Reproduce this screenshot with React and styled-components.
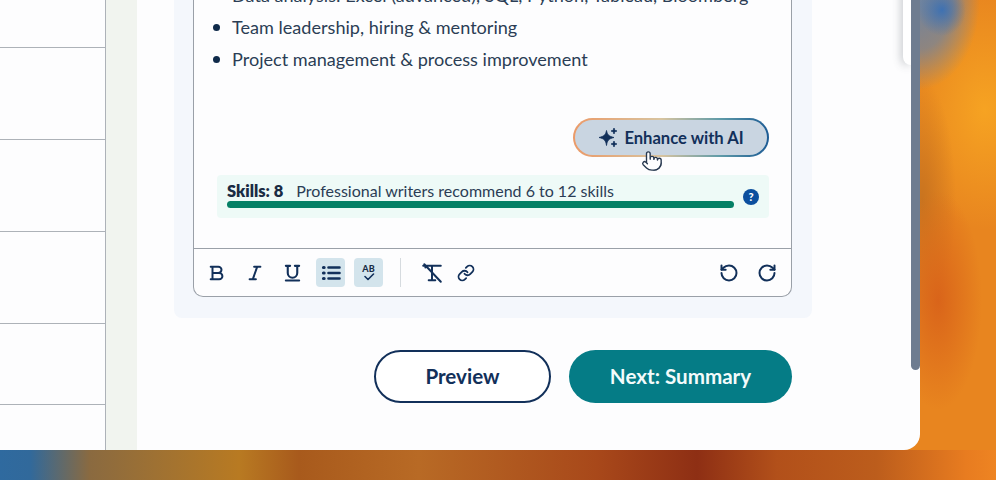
import React from 'react'
import styled, { createGlobalStyle } from 'styled-components'
import { Link, RotateCcw, RotateCw, Pointer } from 'lucide-react'

const GlobalStyle = createGlobalStyle`
  html, body {
    margin: 0;
    width: 996px;
    height: 480px;
    overflow: hidden;
  }
  body {
    font-family: 'Lato', 'Noto Sans', sans-serif;
    color: #2b3d55;
    background-color: #e8851f;
    background-image:
      linear-gradient(90deg, #2f6a9f 0%, #31699b 3%, #8a6a40 9%, #b87a22 24%, #a85a1c 30%, #b86a25 42%, #a8481a 60%, #8e2f14 70%, #b2501a 78%, #bc5d1c 88%, #e87c20 97%, #ee8422 100%),
      radial-gradient(ellipse 24px 26px at 942px 10px, rgba(50, 110, 185, 0.85) 0%, rgba(60, 110, 175, 0) 100%),
      radial-gradient(ellipse 62px 90px at 918px 0px, #6f84a0 0%, rgba(111, 132, 160, 0.75) 55%, rgba(111, 132, 160, 0) 100%),
      radial-gradient(ellipse 44px 110px at 938px 300px, #d9641a 0%, rgba(217, 100, 26, 0) 100%),
      radial-gradient(ellipse 34px 120px at 922px 200px, #c9741f 0%, rgba(201, 116, 31, 0) 100%),
      radial-gradient(ellipse 80px 120px at 985px 110px, #f6a322 0%, rgba(246, 163, 34, 0) 100%);
    background-size: 100% 30px, auto, auto, auto, auto, auto;
    background-position: 0 450px, 0 0, 0 0, 0 0, 0 0, 0 0;
    background-repeat: no-repeat;
  }
  * {
    box-sizing: border-box;
  }
`

const Window = styled.div`
  position: relative;
  display: flex;
  width: 920px;
  height: 450px;
  background: #fdfdfe;
  border-bottom-right-radius: 16px;
  overflow: hidden;
`

const Sidebar = styled.div`
  width: 106px;
  flex: none;
  border-right: 1px solid #adb2b8;
  padding-top: 47px;
`

const SideRow = styled.div`
  height: ${props => props.$height}px;
  border-top: 1px solid #adb2b8;
`

const Strip = styled.div`
  width: 31px;
  flex: none;
  background: #f1f4ef;
`

const Main = styled.div`
  flex: 1;
  padding-left: 37px;
  min-width: 0;
`

const Panel = styled.div`
  width: 638px;
  height: 318px;
  padding: 0 20px 21px 19px;
  background: #f4f7fc;
  border-bottom-left-radius: 8px;
  border-bottom-right-radius: 8px;
`

const Editor = styled.div`
  height: 297px;
  display: flex;
  flex-direction: column;
  background: #fdfdfe;
  border: 1px solid #9aa0a8;
  border-top: none;
  border-bottom-left-radius: 10px;
  border-bottom-right-radius: 10px;
`

const EditorBody = styled.div`
  height: 248px;
  flex: none;
  padding: 0 22px 0 23px;
  overflow: hidden;
`

const Bullets = styled.ul`
  margin: -21px 0 0;
  padding: 0 0 0 15px;
  list-style: none;
  height: 138px;
  font-size: 18.1px;
  line-height: 32px;
`

const Bullet = styled.li`
  position: relative;
  white-space: nowrap;

  &::before {
    content: '';
    position: absolute;
    left: -19px;
    top: 13px;
    width: 7px;
    height: 7px;
    border-radius: 50%;
    background: #0f2a4a;
  }
`

const EnhanceRow = styled.div`
  display: flex;
  justify-content: flex-end;
  padding-top: 1px;
`

const EnhanceButton = styled.button`
  position: relative;
  display: flex;
  align-items: center;
  justify-content: center;
  gap: 5px;
  width: 196px;
  height: 39px;
  padding: 0;
  border: 2px solid transparent;
  border-radius: 20px;
  background:
    linear-gradient(#c9d5e1, #c9d5e1) padding-box,
    linear-gradient(90deg, #eb9a68 0%, #d8c4a0 45%, #5f9ba8 75%, #1c5b94 100%) border-box;
  color: #12305a;
  font-family: inherit;
  font-size: 16.6px;
  font-weight: 700;
`

const Cursor = styled.span`
  position: absolute;
  left: 66px;
  top: 30px;
  width: 22px;
  height: 24px;
  color: #27384f;

  svg {
    fill: #fff;
  }
`

const Meter = styled.div`
  display: flex;
  align-items: center;
  margin-top: 18px;
  height: 43px;
  padding: 0 10px;
  background: #eefaf7;
  border-radius: 4px;
`

const MeterMain = styled.div`
  flex: 1;
  min-width: 0;
`

const MeterText = styled.div`
  display: flex;
  gap: 13px;
  font-size: 16px;
  line-height: 18px;
  margin-top: -4px;
`

const MeterLabel = styled.b`
  color: #1a2c44;
  font-size: 16.5px;
  font-weight: 800;
`

const Track = styled.div`
  height: 7px;
  margin-top: 1px;
  border-radius: 4px;
  background: #058066;
`

const Help = styled.span`
  display: flex;
  align-items: center;
  justify-content: center;
  width: 16px;
  height: 16px;
  margin-left: 9px;
  border-radius: 50%;
  background: #0c4f9e;
  color: #fff;
  font-size: 11px;
  font-weight: 900;
`

const Toolbar = styled.div`
  flex: 1;
  display: flex;
  align-items: center;
  padding: 0 10px 0 8px;
  border-top: 1px solid #9aa0a8;
`

const ToolGroup = styled.div`
  display: flex;
  align-items: center;
  gap: ${props => props.$gap}px;
`

const ToolButton = styled.span`
  position: relative;
  display: flex;
  flex-direction: column;
  align-items: center;
  justify-content: center;
  width: 29px;
  height: 29px;
  border-radius: 4px;
  color: #12305a;
  background: ${props => (props.$active ? '#d3e4ec' : 'transparent')};
`

const ToolDivider = styled.span`
  width: 1px;
  height: 29px;
  margin: 0 16px 0 17px;
  background: #d6dbdf;
`

const SpellLabel = styled.span`
  font-size: 9px;
  font-weight: 900;
  line-height: 9px;
  color: #1a2c44;
`

const Spacer = styled.span`
  flex: 1;
`

const Actions = styled.div`
  display: flex;
  justify-content: flex-end;
  gap: 18px;
  width: 618px;
  margin-top: 32px;
`

const PreviewButton = styled.button`
  width: 177px;
  height: 53px;
  padding: 0 0 2px;
  border: 2px solid #12305a;
  border-radius: 27px;
  background: #fff;
  color: #12305a;
  font-family: inherit;
  font-size: 20.6px;
  font-weight: 700;
`

const NextButton = styled.button`
  width: 223px;
  height: 53px;
  padding: 0 0 2px;
  border: none;
  border-radius: 27px;
  background: #057c86;
  color: #f3fbfb;
  font-family: inherit;
  font-size: 20.6px;
  font-weight: 700;
`

const Scrollbar = styled.div`
  position: absolute;
  top: 0;
  right: 0;
  width: 9px;
  height: 370px;
  background: #6e7c90;
  border-bottom-left-radius: 5px;
  border-bottom-right-radius: 5px;
`

const Popover = styled.div`
  position: absolute;
  top: -20px;
  right: 9px;
  width: 8px;
  height: 85px;
  background: #fff;
  border-bottom-left-radius: 10px;
  box-shadow: -2px 1px 8px rgba(70, 80, 90, 0.3);
`

const Icon = ({ size = 20, width = 2, children }) => (
  <svg
    width={size}
    height={size}
    viewBox="0 0 20 20"
    fill="none"
    stroke="currentColor"
    strokeWidth={width}
    strokeLinecap="round"
    strokeLinejoin="round"
  >
    {children}
  </svg>
)

const BoldIcon = () => (
  <Icon size={18} width={2.2}>
    <path d="M3 3h8.5a3.5 3.5 0 0 1 0 7H5M5 10h7.500a3.500 3.500 0 0 1 0 7H3M5 3v14" />
  </Icon>
)

const ItalicIcon = () => (
  <Icon size={18} width={2.2}>
    <path d="M9 3h7M4 17h7M12.500 3 7.500 17" />
  </Icon>
)

const UnderlineIcon = () => (
  <Icon size={19} width={2.2}>
    <path d="M3 3h4.500M12.500 3H17M5 3v7.500a5 5 0 0 0 10 0V3M3 18.500h14" />
  </Icon>
)

const ListIcon = () => (
  <Icon size={20} width={2.6}>
    <path d="M7.500 4.500H18.500M7.500 10H18.500M7.500 15.500H18.500" />
    <path d="M2.500 4.500h.6M2.500 10h.6M2.500 15.500h.6" strokeWidth={3.2} />
  </Icon>
)

const ClearIcon = () => (
  <Icon size={22} width={1.8}>
    <path d="M2 3.500h16M4 3.500v1.500M10 3.500V16M7 16.500h6M3 2 18 18" />
  </Icon>
)

const SparkleIcon = () => (
  <svg width={21} height={21} viewBox="0 0 21 21" fill="#12305a" stroke="#12305a" strokeWidth={0.8} strokeLinejoin="round">
    <path d="M8.500 3.500C9.300 7.800 10.700 9.200 16 10.500 10.700 11.800 9.300 13.200 8.500 18.500 7.700 13.200 6.300 11.800 1 10.500 6.300 9.200 7.700 7.800 8.500 3.500Z" />
    <path d="M16 1C16.400 2.900 17.100 3.600 19 4 17.100 4.400 16.400 5.100 16 7 15.600 5.100 14.900 4.400 13 4 14.900 3.600 15.600 2.900 16 1Z" />
    <path d="M16 14C16.400 15.900 17.100 16.600 19 17 17.100 17.400 16.400 18.100 16 20 15.600 18.100 14.900 17.400 13 17 14.900 16.600 15.600 15.900 16 14Z" />
  </svg>
)

const rows = [92, 92, 92, 81, 46]
const skills = [
  'Data analysis: Excel (advanced), SQL, Python, Tableau, Bloomberg',
  'Team leadership, hiring & mentoring',
  'Project management & process improvement',
]

const App = () => {
  return (
    <>
      <GlobalStyle />
      <Window>
        <Sidebar>
          {rows.map((height, i) => (
            <SideRow key={i} $height={height} />
          ))}
        </Sidebar>
        <Strip />
        <Main>
          <Panel>
            <Editor>
              <EditorBody>
                <Bullets>
                  {skills.map(skill => (
                    <Bullet key={skill}>{skill}</Bullet>
                  ))}
                </Bullets>
                <EnhanceRow>
                  <EnhanceButton>
                    <SparkleIcon />
                    Enhance with AI
                    <Cursor>
                      <Pointer size={22} strokeWidth={1.5} />
                    </Cursor>
                  </EnhanceButton>
                </EnhanceRow>
                <Meter>
                  <MeterMain>
                    <MeterText>
                      <MeterLabel>Skills: 8</MeterLabel>
                      <span>Professional writers recommend 6 to 12 skills</span>
                    </MeterText>
                    <Track />
                  </MeterMain>
                  <Help>?</Help>
                </Meter>
              </EditorBody>
              <Toolbar>
                <ToolGroup $gap={9}>
                  <ToolButton><BoldIcon /></ToolButton>
                  <ToolButton><ItalicIcon /></ToolButton>
                  <ToolButton><UnderlineIcon /></ToolButton>
                  <ToolButton $active><ListIcon /></ToolButton>
                  <ToolButton $active>
                    <SpellLabel>AB</SpellLabel>
                    <svg width={12} height={8} viewBox="0 0 12 8" fill="none" stroke="#12305a" strokeWidth={1.6} strokeLinecap="round" strokeLinejoin="round">
                      <path d="M2 3.500 5 6.500 10.500 1" />
                    </svg>
                  </ToolButton>
                </ToolGroup>
                <ToolDivider />
                <ToolGroup $gap={5}>
                  <ToolButton><ClearIcon /></ToolButton>
                  <ToolButton><Link size={18} strokeWidth={2.4} /></ToolButton>
                </ToolGroup>
                <Spacer />
                <ToolGroup $gap={9}>
                  <ToolButton><RotateCcw size={20} strokeWidth={2.4} /></ToolButton>
                  <ToolButton><RotateCw size={20} strokeWidth={2.4} /></ToolButton>
                </ToolGroup>
              </Toolbar>
            </Editor>
          </Panel>
          <Actions>
            <PreviewButton>Preview</PreviewButton>
            <NextButton>Next: Summary</NextButton>
          </Actions>
        </Main>
        <Popover />
        <Scrollbar />
      </Window>
    </>
  )
}

export default App
